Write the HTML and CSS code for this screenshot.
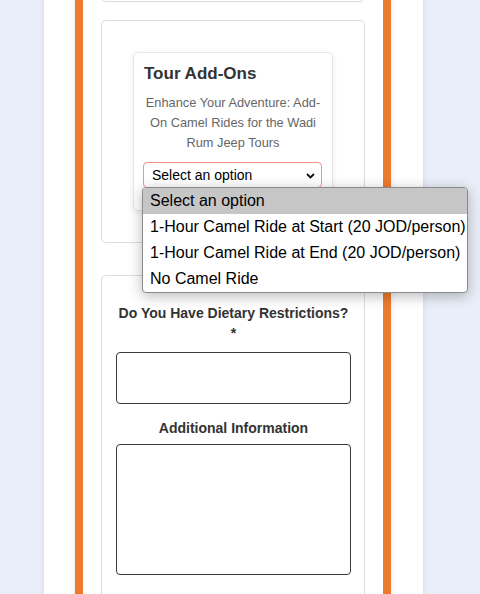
FILE: index.html
```html
<!DOCTYPE html>
<html lang="en">
<head>
<meta charset="utf-8">
<title>Tour Add-Ons</title>
<link rel="stylesheet" href="styles.css">
</head>
<body>
<div class="page">
  <div class="frame">
    <div class="card card-prev"></div>

    <div class="card card-addons">
      <div class="addon">
        <h3 class="addon-title">Tour Add-Ons</h3>
        <p class="addon-desc">Enhance Your Adventure: Add-On Camel Rides for the Wadi Rum Jeep Tours</p>
        <div class="select">
          <span class="select-value">Select an option</span>
          <svg class="select-arrow" width="9" height="6" viewBox="0 0 9 6"><path d="M1 1l3.5 3.5L8 1" fill="none" stroke="#111" stroke-width="1.8"/></svg>
          <ul class="options">
            <li class="option selected">Select an option</li>
            <li class="option">1-Hour Camel Ride at Start (20 JOD/person)</li>
            <li class="option">1-Hour Camel Ride at End (20 JOD/person)</li>
            <li class="option">No Camel Ride</li>
          </ul>
        </div>
      </div>
    </div>

    <div class="card card-form">
      <label class="field-label">Do You Have Dietary Restrictions? *</label>
      <div class="input"></div>
      <label class="field-label label-info">Additional Information</label>
      <div class="textarea"></div>
    </div>
  </div>
</div>
</body>
</html>
```

FILE: styles.css
```css
* { box-sizing: border-box; }

html, body {
  margin: 0;
  height: 100%;
  overflow: hidden;
}

body {
  background: #e9eef8;
  font-family: "Liberation Sans", Arial, sans-serif;
  color: #333;
}

.page {
  margin-left: 44px;
  width: 379px;
  min-height: 100%;
  background: #fff;
  padding: 0 32px 0 31px;
  box-shadow: 0 0 5px rgba(0, 0, 0, 0.10);
}

.frame {
  border-left: 8px solid #ec7b2f;
  border-right: 8px solid #ec7b2f;
  padding: 0 18px 40px;
  min-height: 700px;
  box-shadow: 0 0 6px rgba(0, 0, 0, 0.10);
}

.card {
  background: #fff;
  border: 1px solid #dcdcdc;
  border-radius: 5px;
}

.card-prev {
  margin-top: -58px;
  height: 60px;
}

.card-addons {
  margin-top: 18px;
  padding: 31px;
}

.addon {
  width: 200px;
  margin: 0 auto;
  border: 1px solid #e6e6e6;
  border-radius: 5px;
  padding: 10px 10px 22px;
  box-shadow: 0 2px 6px rgba(0, 0, 0, 0.08);
  background: #fff;
}

.addon-title {
  margin: 0;
  font-size: 17px;
  line-height: 22px;
  font-weight: bold;
  color: #333;
}

.addon-desc {
  margin: 8px 0 9px;
  font-size: 12.8px;
  line-height: 20px;
  color: #666;
  text-align: center;
}

.select {
  position: relative;
  height: 26px;
  margin-left: -1px;
  border: 1px solid #f0948c;
  border-radius: 4px;
  padding: 0 8px;
  font-size: 14px;
  line-height: 24px;
  color: #000;
  background: #fff;
}

.select-arrow {
  position: absolute;
  right: 6px;
  top: 10px;
}

.options {
  position: absolute;
  z-index: 10;
  top: 24px;
  left: -2px;
  width: 326px;
  margin: 0;
  padding: 0;
  list-style: none;
  background: #fff;
  border: 1px solid #8a8a8a;
  border-radius: 4px;
  overflow: hidden;
  box-shadow: 0 3px 14px rgba(0, 0, 0, 0.28);
}

.option {
  height: 26px;
  line-height: 26px;
  padding: 0 7px;
  font-size: 16px;
  color: #000;
  white-space: nowrap;
}

.option.selected {
  background: #c6c6c6;
}

.card-form {
  margin-top: 32px;
  padding: 27px 13px 0 14px;
  height: 400px;
}

.field-label {
  display: block;
  font-size: 14px;
  line-height: 20px;
  font-weight: bold;
  color: #333;
  text-align: center;
  margin-bottom: 9px;
}

.label-info {
  margin-top: 14px;
  margin-bottom: 6px;
}

.input {
  height: 52px;
  border: 1px solid #3a3a3a;
  border-radius: 4px;
}

.textarea {
  height: 131px;
  border: 1px solid #3a3a3a;
  border-radius: 4px;
}
```
